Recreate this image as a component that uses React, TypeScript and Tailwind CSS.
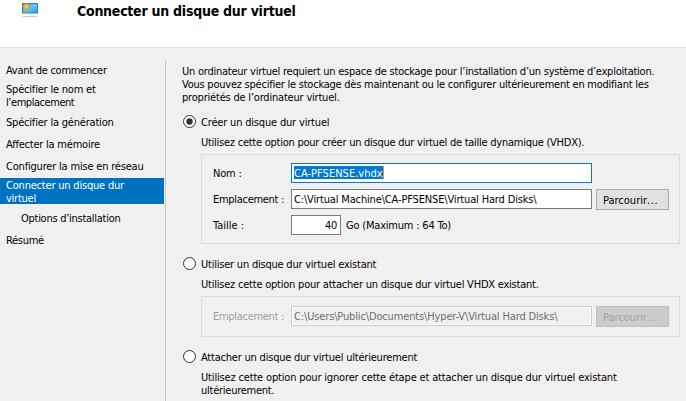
import type { ReactNode } from "react";

function MonitorIcon() {
  return (
    <svg width="18" height="18" viewBox="0 0 18 18" className="block">
      <defs>
        <linearGradient id="screen" x1="0" y1="0" x2="1" y2="1">
          <stop offset="0" stopColor="#2f9fe6" />
          <stop offset="0.5" stopColor="#67c3f9" />
          <stop offset="1" stopColor="#2a9ce8" />
        </linearGradient>
      </defs>
      <rect x="1" y="1" width="16" height="10.5" fill="#3f7fae" />
      <rect x="2" y="2" width="14" height="8.5" fill="url(#screen)" />
      <rect x="8" y="11.5" width="2.5" height="1" fill="#b5c6d3" />
      <rect x="1.5" y="14" width="15" height="1" rx="0.5" fill="#c2ccd4" />
      <g stroke="#f3a51c" strokeWidth="1.3">
        <path d="M5.3 1v7.4M1.6 4.7H9M2.7 2.1l5.2 5.2M7.9 2.1L2.7 7.3" />
      </g>
      <circle cx="5.3" cy="4.7" r="2.2" fill="#f9b52c" />
      <circle cx="5.3" cy="4.7" r="1" fill="#ffd978" />
    </svg>
  );
}

function Radio({ checked = false }: { checked?: boolean }) {
  return (
    <svg width="13" height="13" viewBox="0 0 13 13" className="block shrink-0">
      <circle cx="6.5" cy="6.5" r="6" fill="#fff" stroke="#333" />
      {checked && <circle cx="6.5" cy="6.5" r="3.2" fill="#333" />}
    </svg>
  );
}

function Option({ label, className, checked }: { label: string; className: string; checked?: boolean }) {
  return (
    <div className="flex h-[14px] items-start gap-[5px]">
      <Radio checked={checked} />
      <span className={`pt-px ${className}`}>{label}</span>
    </div>
  );
}

function Group({ className, children }: { className: string; children: ReactNode }) {
  return (
    <div className={`mt-[5px] ml-[18px] flex w-[479px] flex-col border border-[#dcdcdc] pl-[11px] ${className}`}>
      {children}
    </div>
  );
}

function BrowseButton({ disabled = false }: { disabled?: boolean }) {
  return (
    <button
      disabled={disabled}
      className={`ml-1 flex h-[21px] w-[73px] shrink-0 items-start border pt-[4px] pl-[6px] ${
        disabled ? "border-[#bfbfbf] bg-[#cccccc]" : "border-[#adadad] bg-[#e1e1e1]"
      }`}
    >
      Parcourir<span className="tracking-[0.6px]">...</span>
    </button>
  );
}

export default function App() {
  return (
    <div className="flex h-[401px] w-[686px] flex-col overflow-hidden whitespace-nowrap bg-[#f0f0f0] font-['DejaVu_Sans_Condensed','DejaVu_Sans',sans-serif] text-[11px] leading-[13px] text-black">
      <header className="flex h-12 shrink-0 items-start border-b border-[#dcdcdc] bg-white pl-[21px]">
        <div className="mt-[2px] w-[56px]">
          <MonitorIcon />
        </div>
        <h1 className="mt-[2px] text-[14px] leading-[18px] font-bold tracking-[-0.25px]">Connecter un disque dur virtuel</h1>
      </header>

      <div className="flex min-h-0 flex-1 pt-3">
        <nav className="flex w-[166px] shrink-0 flex-col border-r border-[#c8c8c8] pt-[4px]">
          <div className="pl-[6px] tracking-[-0.27px]">Avant de commencer</div>
          <div className="mt-[6px] pl-[6px]">
            <div className="tracking-[-0.2px]">Spécifier le nom et</div>
            <div className="tracking-[-0.45px]">l’emplacement</div>
          </div>
          <div className="mt-[7px] pl-[6px] tracking-[-0.2px]">Spécifier la génération</div>
          <div className="mt-[9px] pl-[6px] tracking-[-0.22px]">Affecter la mémoire</div>
          <div className="mt-[9px] pl-[6px] tracking-[-0.19px]">Configurer la mise en réseau</div>
          <div className="mt-[5px] mr-px h-[26px] bg-[#0072c0] pt-px pl-[6px] text-white">
            <div className="tracking-[-0.2px]">Connecter un disque dur</div>
            <div className="tracking-[-0.25px]">virtuel</div>
          </div>
          <div className="mt-[8px] pl-[21px] tracking-[-0.27px]">Options d’installation</div>
          <div className="mt-[9px] pl-[6px] tracking-[-0.3px]">Résumé</div>
        </nav>

        <main className="flex flex-1 flex-col pt-[5px] pl-[17px]">
          <p className="-ml-px">
            <span className="block tracking-[-0.238px]">
              Un ordinateur virtuel requiert un espace de stockage pour l’installation d’un système d’exploitation.
            </span>
            <span className="block tracking-[-0.235px]">
              Vous pouvez spécifier le stockage dès maintenant ou le configurer ultérieurement en modifiant les
            </span>
            <span className="block tracking-[-0.2px]">propriétés de l’ordinateur virtuel.</span>
          </p>

          <div className="mt-[11px]">
            <Option checked label="Créer un disque dur virtuel" className="tracking-[-0.18px]" />
          </div>
          <p className="mt-[7px] pl-[18px] tracking-[-0.25px]">
            Utilisez cette option pour créer un disque dur virtuel de taille dynamique (VHDX).
          </p>
          <Group className="h-[90px] gap-[6px] pt-2">
            <div className="flex h-5 items-start">
              <span className="w-[78px] pt-[4px] tracking-[-0.2px]">Nom :</span>
              <div className="flex h-5 w-[301px] items-start border border-[#0078d7] bg-white pt-[2px] pl-[2px]">
                <span className="h-[13px] bg-[#0078d7] leading-[15px] tracking-[0.02px] text-white">CA-PFSENSE.vhdx</span>
                <span className="h-[13px] w-px bg-[#ff8728]" />
              </div>
            </div>
            <div className="flex h-5 items-start">
              <span className="w-[78px] pt-[4px] tracking-[-0.3px]">Emplacement :</span>
              <div className="h-5 w-[301px] border border-[#7a7a7a] bg-white pt-[3px] pl-[2px] tracking-[-0.155px]">
                C:\Virtual Machine\CA-PFSENSE\Virtual Hard Disks\
              </div>
              <BrowseButton />
            </div>
            <div className="flex h-5 items-start">
              <span className="w-[78px] pt-[4px]">Taille :</span>
              <div className="h-5 w-[50px] border border-[#7a7a7a] bg-white pt-[3px] pr-[3px] text-right tracking-[-0.3px]">
                40
              </div>
              <span className="ml-[5px] pt-[4px] tracking-[-0.2px]">Go (Maximum : 64 To)</span>
            </div>
          </Group>

          <div className="mt-[13px]">
            <Option label="Utiliser un disque dur virtuel existant" className="tracking-[-0.22px]" />
          </div>
          <p className="mt-[7px] pl-[18px] tracking-[-0.22px]">
            Utilisez cette option pour attacher un disque dur virtuel VHDX existant.
          </p>
          <Group className="h-[41px] pt-[9px] text-[#a0a0a0]">
            <div className="flex h-5 items-start">
              <span className="w-[78px] pt-[4px] tracking-[-0.3px]">Emplacement :</span>
              <div className="h-5 w-[301px] border border-[#cccccc] pt-[3px] pl-[2px] tracking-[-0.145px] text-[#6d6d6d] shadow-[inset_0_0_0_1px_#fff]">
                C:\Users\Public\Documents\Hyper-V\Virtual Hard Disks\
              </div>
              <BrowseButton disabled />
            </div>
          </Group>

          <div className="mt-[13px]">
            <Option label="Attacher un disque dur virtuel ultérieurement" className="tracking-[-0.21px]" />
          </div>
          <p className="mt-[7px] pl-[18px]">
            <span className="block tracking-[-0.165px]">
              Utilisez cette option pour ignorer cette étape et attacher un disque dur virtuel existant
            </span>
            <span className="block tracking-[-0.25px]">ultérieurement.</span>
          </p>
        </main>
      </div>
    </div>
  );
}
